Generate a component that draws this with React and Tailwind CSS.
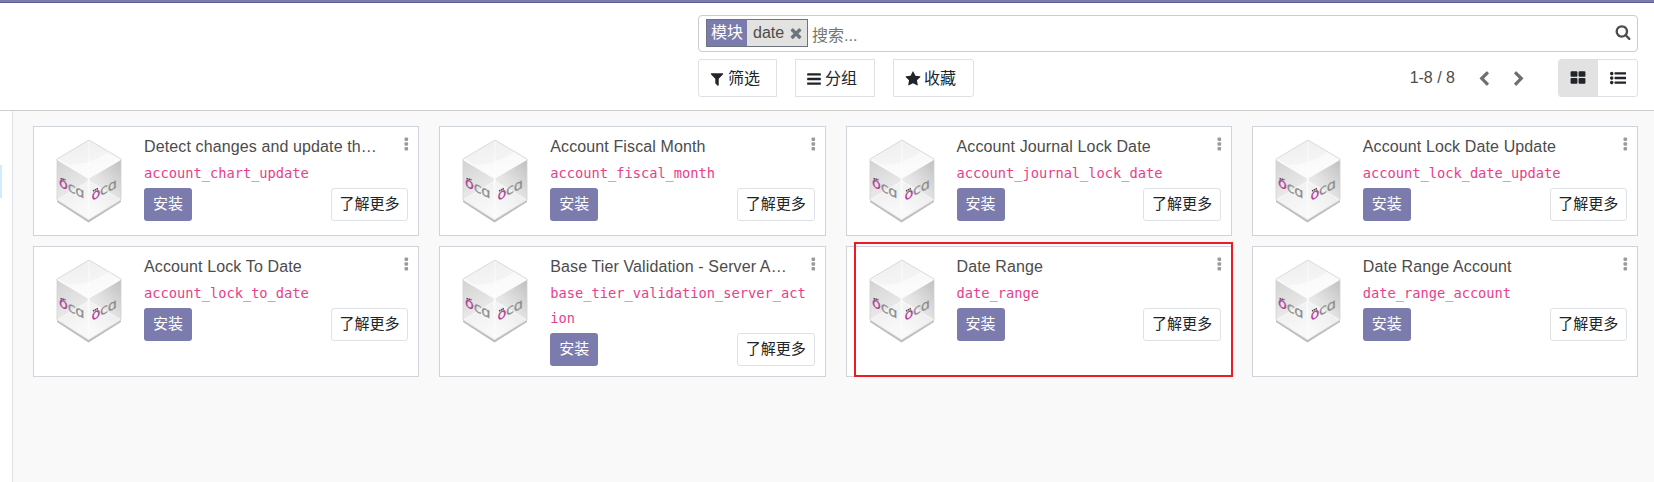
const ICONS = {
  filter: "M1595 295q17 41-14 70l-493 493v742q0 42-39 59-13 5-25 5-27 0-45-19l-256-256q-19-19-19-45v-486l-493-493q-31-29-14-70 17-39 59-39h1280q42 0 59 39z",
  bars: "M1664 1344v128q0 26-19 45t-45 19h-1408q-26 0-45-19t-19-45v-128q0-26 19-45t45-19h1408q26 0 45 19t19 45zm0-512v128q0 26-19 45t-45 19h-1408q-26 0-45-19t-19-45v-128q0-26 19-45t45-19h1408q26 0 45 19t19 45zm0-512v128q0 26-19 45t-45 19h-1408q-26 0-45-19t-19-45v-128q0-26 19-45t45-19h1408q26 0 45 19t19 45z",
  star: "M1728 647q0 22-26 48l-363 354 86 500q1 7 1 20 0 21-10.5 35.5t-30.5 14.5q-19 0-40-12l-449-236-449 236q-22 12-40 12-21 0-31.5-14.5t-10.5-35.5q0-6 2-20l86-500-364-354q-25-27-25-48 0-37 56-46l502-73 225-455q19-41 49-41t49 41l225 455 502 73q56 9 56 46z",
  grid: "M832 1024v384q0 52-38 90t-90 38h-512q-52 0-90-38t-38-90v-384q0-52 38-90t90-38h512q52 0 90 38t38 90zm0-768v384q0 52-38 90t-90 38h-512q-52 0-90-38t-38-90v-384q0-52 38-90t90-38h512q52 0 90 38t38 90zm896 768v384q0 52-38 90t-90 38h-512q-52 0-90-38t-38-90v-384q0-52 38-90t90-38h512q52 0 90 38t38 90zm0-768v384q0 52-38 90t-90 38h-512q-52 0-90-38t-38-90v-384q0-52 38-90t90-38h512q52 0 90 38t38 90z",
  list: "M384 1408q0 80-56 136t-136 56-136-56-56-136 56-136 136-56 136 56 56 136zm0-512q0 80-56 136t-136 56-136-56-56-136 56-136 136-56 136 56 56 136zm1408 416v192q0 13-9.5 22.5t-22.5 9.5h-1216q-13 0-22.5-9.5t-9.5-22.5v-192q0-13 9.5-22.5t22.5-9.5h1216q13 0 22.5 9.5t9.5 22.5zm-1408-928q0 80-56 136t-136 56-136-56-56-136 56-136 136-56 136 56 56 136zm1408 416v192q0 13-9.5 22.5t-22.5 9.5h-1216q-13 0-22.5-9.5t-9.5-22.5v-192q0-13 9.5-22.5t22.5-9.5h1216q13 0 22.5 9.5t9.5 22.5zm0-512v192q0 13-9.5 22.5t-22.5 9.5h-1216q-13 0-22.5-9.5t-9.5-22.5v-192q0-13 9.5-22.5t22.5-9.5h1216q13 0 22.5 9.5t9.5 22.5z",
  search: "M1216 832q0-185-131.5-316.5t-316.5-131.5-316.5 131.5-131.5 316.5 131.5 316.5 316.5 131.5 316.5-131.5 131.5-316.5zm512 832q0 52-38 90t-90 38q-54 0-90-38l-343-342q-179 124-399 124-143 0-273.5-55.5t-225-150-150-225-55.5-273.5 55.5-273.5 150-225 225-150 273.5-55.5 273.5 55.5 225 150 150 225 55.5 273.5q0 220-124 399l343 343q37 37 37 90z",
  times: "M1490 1322q0 40-28 68l-136 136q-28 28-68 28t-68-28l-294-294-294 294q-28 28-68 28t-68-28l-136-136q-28-28-28-68t28-68l294-294-294-294q-28-28-28-68t28-68l136-136q28-28 68-28t68 28l294 294 294-294q28-28 68-28t68 28l136 136q28 28 28 68t-28 68l-294 294 294 294q28 28 28 68z",
  left: "M1427 301l-531 531 531 531q19 19 19 45t-19 45l-166 166q-19 19-45 19t-45-19l-742-742q-19-19-19-45t19-45l742-742q19-19 45-19t45 19l166 166q19 19 19 45t-19 45z",
  right: "M1363 877l-742 742q-19 19-45 19t-45-19l-166-166q-19-19-19-45t19-45l531-531-531-531q-19-19-19-45t19-45l166-166q19-19 45-19t45 19l742 742q19 19 19 45t-19 45z",
};

function Icon({ name, className = "size-4" }) {
  return (
    <svg viewBox="0 0 1792 1792" fill="currentColor" className={`shrink-0 ${className}`}>
      <path d={ICONS[name]} />
    </svg>
  );
}

function Cube() {
  return (
    <svg viewBox="0 0 66 84" className="h-[84px] w-[66px] shrink-0">
      <defs>
        <linearGradient id="cubeTop" x1="0" y1="0" x2="0.3" y2="1">
          <stop offset="0" stopColor="#eeeeee" />
          <stop offset="1" stopColor="#f8f8f8" />
        </linearGradient>
        <linearGradient id="cubeLeft" x1="0" y1="0" x2="0.3" y2="1">
          <stop offset="0" stopColor="#d2d2d2" />
          <stop offset="0.55" stopColor="#e6e6e6" />
          <stop offset="1" stopColor="#f4f4f4" />
        </linearGradient>
        <linearGradient id="cubeRight" x1="0.9" y1="0" x2="0.3" y2="1">
          <stop offset="0" stopColor="#c2c2c2" />
          <stop offset="0.5" stopColor="#e4e4e4" />
          <stop offset="1" stopColor="#f6f6f6" />
        </linearGradient>
      </defs>
      <path d="M1 61 32.500 81 65 61V63L32.500 83.500 1 63Z" fill="#bcbcbc" />
      <path d="M33 1 65 20 32.500 39 1 20Z" fill="url(#cubeTop)" />
      <path d="M1 20 32.500 39V81L1 61Z" fill="url(#cubeLeft)" />
      <path d="M65 20 32.500 39V81L65 61Z" fill="url(#cubeRight)" />
      <path d="M1 61 33 42 65 61 32.500 80Z" fill="#ffffff" opacity="0.4" />
      <path d="M33 1V42M33 42 1 61M33 42 65 61" stroke="#ffffff" strokeWidth="0.9" opacity="0.7" fill="none" />
      <path d="M12 26Q34 26 52 13L65 20 32.500 39Z" fill="#ffffff" opacity="0.5" />
      <path d="M1 20 32.500 39 65 20M32.500 39V80" stroke="#fbfbfb" strokeWidth="1.6" fill="none" />
      <path d="M1 20 33 1 65 20V61L32.500 81 1 61Z" stroke="#d2d2d2" strokeWidth="0.8" fill="none" />
      <g fontFamily="'DejaVu Sans', sans-serif" fontSize="14.500" fill="#8d8d8d" stroke="#8d8d8d" strokeWidth="0.25">
        <text transform="matrix(1 0.5 0 0.95 3 47)">
          <tspan x="0" fill="#b13f9b" stroke="#b13f9b">o</tspan><tspan x="8.800">c</tspan><tspan x="16.300">ɑ</tspan>
        </text>
        <text transform="matrix(1 -0.54 0 0.95 35.500 62)">
          <tspan x="0" fill="#b13f9b" stroke="#b13f9b">o</tspan><tspan x="8.600">c</tspan><tspan x="16.300">ɑ</tspan>
        </text>
      </g>
      <path d="M4.500 39.600 9.500 40.800M37 52 42 49.500" stroke="#4b4b4b" strokeWidth="1.500" strokeDasharray="1.500 0.500" />
    </svg>
  );
}

function Card({ title, name, marked }) {
  return (
    <article className="relative flex min-h-[110px] border border-[#ced4da] bg-white pt-3 pr-[10px] pb-[10px] pl-[22px]">
      <Cube />
      <div className="ml-[22px] min-w-0 flex-1">
        <h3 className="-mt-[4px] text-[16px] leading-6 tracking-[0.12px] whitespace-nowrap">{title}</h3>
        <div className="mt-[2px] w-[257px] pb-[2px] font-['DejaVu_Sans_Mono',monospace] text-[13.7px] leading-[25px] break-all text-[#e83e8c]">
          {name}
        </div>
        <div className="flex justify-between">
          <button className="h-[33px] w-12 rounded-[3px] bg-[#7c7bad] pb-[2px] text-[15px] leading-none text-white">安装</button>
          <button className="h-[33px] w-[77.4px] rounded-[3px] border border-[#dee2e6] bg-white pb-[2px] text-[15px] leading-none whitespace-nowrap text-[#212529]">
            了解更多
          </button>
        </div>
      </div>
      <svg viewBox="0 0 5 14" className="absolute top-[10px] right-[9px] h-[14px] w-[5px]" fill="#9b9b9b">
        <rect x="0.500" y="0.500" width="3.600" height="3.600" rx="1" />
        <rect x="0.500" y="5.200" width="3.600" height="3.600" rx="1" />
        <rect x="0.500" y="9.900" width="3.600" height="3.600" rx="1" />
      </svg>
      {marked && <div className="absolute -top-[5px] -right-[2px] -bottom-px left-[7px] border-2 border-[#ed1c24]" />}
    </article>
  );
}

const MODULES = [
  ["Detect changes and update th…", "account_chart_update"],
  ["Account Fiscal Month", "account_fiscal_month"],
  ["Account Journal Lock Date", "account_journal_lock_date"],
  ["Account Lock Date Update", "account_lock_date_update"],
  ["Account Lock To Date", "account_lock_to_date"],
  ["Base Tier Validation - Server A…", "base_tier_validation_server_action"],
  ["Date Range", "date_range"],
  ["Date Range Account", "date_range_account"],
];

const MENU = "flex h-[38px] items-center gap-[3px] border border-[#dee2e6] pt-px pl-[10px] text-[16px] text-[#212529]";

export default function App() {
  return (
    <div className="flex h-[482px] w-[1654px] flex-col overflow-hidden bg-white font-['Liberation_Sans','Noto_Sans_CJK_SC',sans-serif] text-[#4c4c4c]">
      <div className="h-[3px] shrink-0 border-b border-[#5f5e97] bg-[#7c7bad]" />
      <header className="flex h-[108px] shrink-0 flex-col border-b border-[#ccc] pt-3 pr-4 pl-[698px]">
        <div className="flex h-[37px] items-center rounded border border-[#ccc] pr-[6px] pl-[7px]">
          <div className="mb-[2px] flex h-7 w-[102px] items-center border border-[#6c757d] bg-[#e2e2e0]">
            <span className="flex h-full w-10 items-center justify-center bg-[#7c7bad] pt-px text-[16px] leading-none text-white">模块</span>
            <span className="ml-[6px] text-[16px] leading-none">date</span>
            <Icon name="times" className="mt-px ml-[4px] size-4 text-[#6c757d]" />
          </div>
          <span className="mt-[4px] ml-1 flex-1 text-[16px] leading-none text-[#757575]">搜索...</span>
          <Icon name="search" className="-mt-[3px] size-4" />
        </div>
        <div className="mt-[7px] flex">
          <button className={`${MENU} w-[79px] rounded-l-[3px]`}><Icon name="filter" />筛选</button>
          <button className={`${MENU} ml-[18px] w-[80px]`}><Icon name="bars" />分组</button>
          <button className={`${MENU} ml-[18px] w-[81px] rounded-r-[3px]`}><Icon name="star" className="ml-px size-4" />收藏</button>
          <div className="ml-auto flex items-center">
            <span className="text-[16px] leading-none">1-8 / 8</span>
            <Icon name="left" className="mt-px ml-[21px] size-4 text-[#6c6f73]" />
            <Icon name="right" className="mt-px ml-[19px] size-4 text-[#6c6f73]" />
            <div className="ml-[31px] flex h-[38px] w-20 overflow-hidden rounded-[3px] border border-[#dee2e6] text-[#212529]">
              <span className="flex w-[39px] items-center justify-center border-r border-[#dee2e6] bg-[#e2e2e2]"><Icon name="grid" /></span>
              <span className="flex flex-1 items-center justify-center"><Icon name="list" /></span>
            </div>
          </div>
        </div>
      </header>
      <main className="flex min-h-0 flex-1">
        <aside className="w-[13px] shrink-0 border-r border-[#dee2e6] pt-[54px]">
          <div className="h-[33px] w-[2px] bg-[#d1ecfa]" />
        </aside>
        <div className="grid flex-1 grid-cols-4 content-start gap-x-5 gap-y-[10px] bg-[#f9f9f9] pt-[15px] pr-4 pl-5">
          {MODULES.map(([title, name]) => (
            <Card key={name} title={title} name={name} marked={name === "date_range"} />
          ))}
        </div>
      </main>
    </div>
  );
}
